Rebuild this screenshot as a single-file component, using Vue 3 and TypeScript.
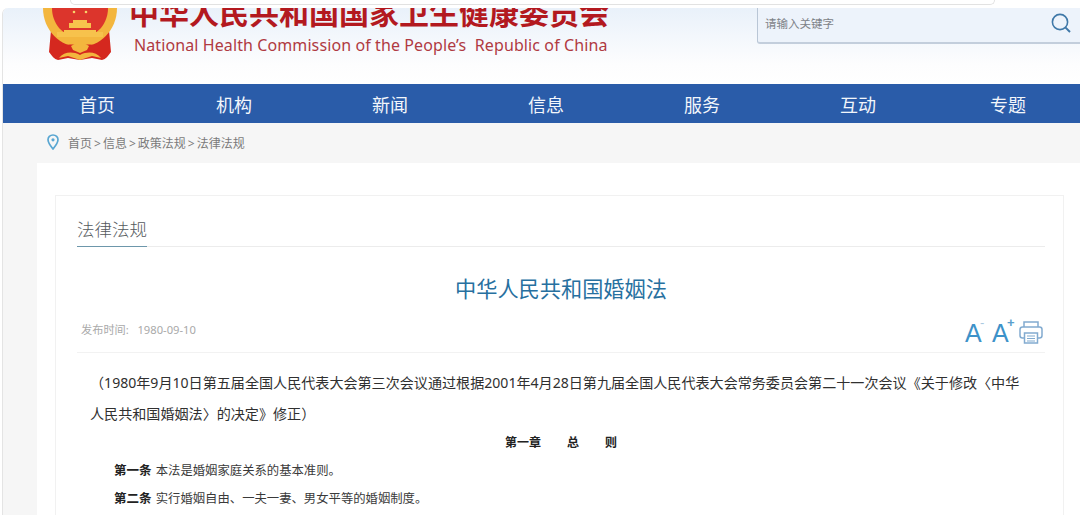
<script setup lang="ts">
const navItems = ['首页', '机构', '新闻', '信息', '服务', '互动', '专题']
const crumbs = ['首页', '信息', '政策法规', '法律法规']
</script>

<template>
  <div class="page">
    <div class="top-strip"><div class="tab-edge"></div></div>
    <div class="frame">
      <header class="header">
        <svg class="emblem" viewBox="0 0 80 54" width="80" height="54">
          <path d="M11 22 L69 22 L71 44 C68 48 66 51 62 52 L52 50 L40 52 L28 50 L18 52 C14 51 12 48 9 44 Z" fill="#d5281f" />
          <path d="M3 0 C3 22 20 39 40 39 C60 39 77 22 77 0 Z" fill="#f3b63e" />
          <path d="M12 0 C12 15 22 29 40 29 C58 29 68 15 68 0 Z" fill="#dc352c" />
          <path d="M29 15 H51 V20 H29 Z M24 22 H56 V24 H63 V29 H17 V24 H24 Z" fill="#f7c24c" />
          <rect x="33" y="12" width="14" height="3" fill="#f7c24c" />
          <path d="M20 40 C27 34 33 38 40 36 C47 38 53 34 60 40 C55 43 49 42 40 41 C31 42 25 43 20 40 Z" fill="#d5281f" />
          <path d="M31 38 L40 33 L49 38 L47 42 L40 45 L33 42 Z" fill="#f3b63e" />
          <path d="M19 50 C24 44 32 43 40 47 C48 43 56 44 61 50 L52 48 L40 52 L28 48 Z" fill="#f3b63e" />
          <circle cx="34" cy="4" r="1.300" fill="#f8d36a" />
          <circle cx="46" cy="4" r="1.300" fill="#f8d36a" />
        </svg>
        <div class="brand">
          <div class="brand-cn">中华人民共和国国家卫生健康委员会</div>
          <div class="brand-en">National Health Commission of the People’s&nbsp; Republic of China</div>
        </div>
        <div class="search">
          <span class="search-hint">请输入关键字</span>
          <svg class="search-icon" viewBox="0 0 20 20" width="20" height="20">
            <circle cx="9" cy="9" r="7.600" fill="none" stroke="#3f78a8" stroke-width="1.600" />
            <path d="M14.600 14.600 L19 19" stroke="#3f78a8" stroke-width="2" />
          </svg>
        </div>
      </header>

      <nav class="nav">
        <a v-for="item in navItems" :key="item" class="nav-item">{{ item }}</a>
      </nav>

      <div class="crumbs">
        <svg class="pin" viewBox="0 0 12 16" width="12" height="16">
          <path d="M6 1 C3 1 1 3.200 1 5.800 C1 9 4 12.500 6 15 C8 12.500 11 9 11 5.800 C11 3.200 9 1 6 1 Z" fill="none" stroke="#5aa7d2" stroke-width="1.700" />
          <circle cx="6" cy="5.800" r="1.600" fill="#5aa7d2" />
        </svg>
        <span>
          <template v-for="(crumb, i) in crumbs" :key="crumb">
            <span v-if="i > 0" class="sep">&gt;</span>{{ crumb }}
          </template>
        </span>
      </div>

      <main class="panel">
        <section class="card">
          <div class="section-head"><span class="section-title">法律法规</span></div>
          <h1 class="article-title">中华人民共和国婚姻法</h1>
          <div class="meta">
            <span class="date">发布时间:&nbsp;&nbsp;&nbsp;1980-09-10</span>
            <div class="tools">
              <span class="font-btn">A<sup class="minus">-</sup></span>
              <span class="font-btn">A<sup class="plus">+</sup></span>
              <svg class="printer" viewBox="0 0 24 24" width="24" height="24">
                <g fill="none" stroke="#82abd0" stroke-width="1.500">
                  <path d="M5 7 V2 H19 V7" />
                  <rect x="1" y="7" width="22" height="11" rx="2.500" />
                  <rect x="5.500" y="13" width="13" height="10" fill="#fff" />
                  <path d="M8 16 H16 M8 18.500 H16 M8 21 H16" stroke-width="1.200" />
                </g>
              </svg>
            </div>
          </div>
          <div class="content">
            <p class="preface">（1980年9月10日第五届全国人民代表大会第三次会议通过根据2001年4月28日第九届全国人民代表大会常务委员会第二十一次会议《关于修改〈中华<br />人民共和国婚姻法〉的决定》修正）</p>
            <h2 class="chapter">第一章<span class="gap"></span>总<span class="gap"></span>则</h2>
            <p class="clause"><b>第一条</b> 本法是婚姻家庭关系的基本准则。</p>
            <p class="clause"><b>第二条</b> 实行婚姻自由、一夫一妻、男女平等的婚姻制度。</p>
          </div>
        </section>
      </main>
    </div>
  </div>
</template>

<style>
html,
body {
  margin: 0;
  background: #fff;
}
</style>

<style scoped>
.page {
  width: 1080px;
  height: 515px;
  overflow: hidden;
  background: #fff;
  font-family: "Noto Sans", "Noto Sans CJK SC", sans-serif;
}

.top-strip {
  height: 8px;
  padding-left: 70px;
}

.tab-edge {
  width: 923px;
  height: 4px;
  border: 1px solid #e2e2e2;
  border-top: none;
  border-radius: 0 0 10px 10px;
}

.frame {
  margin-left: 2px;
  border-left: 1px solid #e4e4e4;
  border-top-left-radius: 6px;
  overflow: hidden;
}

.header {
  height: 76px;
  display: flex;
  align-items: flex-start;
  background: linear-gradient(#e9f1fa, #fdfdfe 75%, #fff);
}

.emblem {
  margin-left: 37px;
  flex: none;
}

.brand {
  margin-left: 9px;
  width: 500px;
  margin-top: -15px;
}

.brand-cn {
  height: 37px;
  line-height: 37px;
  font-size: 30px;
  font-weight: 700;
  color: #b3191f;
  white-space: nowrap;
  font-family: "Noto Sans CJK SC", sans-serif;
}

.brand-en {
  margin-left: 5px;
  margin-top: 3px;
  font-size: 16px;
  line-height: 24px;
  letter-spacing: 0.1px;
  color: #b03a42;
  white-space: nowrap;
}

.search {
  margin-left: 128px;
  flex: 1;
  height: 36px;
  display: flex;
  align-items: center;
  justify-content: space-between;
  padding: 0 9px 0 7px;
  background: #edf3fb;
  border-left: 1px solid #b9c6d6;
  border-bottom: 2px solid #c3cedc;
  border-bottom-left-radius: 3px;
  box-sizing: border-box;
}

.search-hint {
  font-size: 11.500px;
  color: #7d8288;
  margin-top: -4px;
}

.search-icon {
  margin-top: -4px;
}

.nav {
  height: 39px;
  display: flex;
  align-items: center;
  gap: 120px;
  padding-left: 76px;
  background: #2a5ca9;
}

.nav-item {
  font-size: 18px;
  line-height: 39px;
  padding-top: 1px;
  color: #f2f6fb;
  white-space: nowrap;
  font-family: "Noto Sans CJK SC", sans-serif;
}

.nav-item:first-child {
  margin-right: -19px;
}

.nav-item:last-child {
  margin-left: -6px;
}

.crumbs {
  height: 40px;
  display: flex;
  align-items: center;
  gap: 9px;
  padding-left: 44px;
  background: #f6f6f6;
  font-size: 12px;
  color: #7b7b7b;
}

.sep {
  padding: 0 2px;
}

.pin {
  margin-top: -2px;
}

.panel {
  margin-left: 34px;
  padding: 32px 16px 0 18px;
  background: #fff;
  height: 320px;
  box-shadow: -34px 0 0 #f6f6f6;
}

.card {
  height: 400px;
  padding: 0 18px 0 21px;
  border: 1px solid #f1f1f1;
}

.section-head {
  height: 50px;
  display: flex;
  align-items: flex-end;
  border-bottom: 1px solid #ececec;
}

.section-title {
  font-size: 17.500px;
  line-height: 29px;
  height: 31px;
  color: #55595d;
  font-weight: 300;
  border-bottom: 1px solid #6d97ab;
  margin-bottom: -1px;
}

.article-title {
  margin: 24px 0 0;
  text-align: center;
  font-size: 21.200px;
  line-height: 34px;
  font-weight: 400;
  color: #27709f;
  font-family: "Noto Sans CJK SC", sans-serif;
}

.meta {
  height: 37px;
  margin-top: 10px;
  padding: 0 2px 0 4px;
  display: flex;
  justify-content: space-between;
  align-items: flex-start;
  border-bottom: 1px solid #f2f2f2;
}

.date {
  font-size: 11.200px;
  line-height: 20px;
  margin-top: 5px;
  color: #a9a9a9;
}

.tools {
  display: flex;
  align-items: flex-start;
  margin-top: 5px;
}

.font-btn {
  width: 27px;
  font-size: 25px;
  line-height: 26px;
  color: #3d92c9;
  position: relative;
  font-family: "Liberation Sans", sans-serif;
}

.font-btn sup {
  position: absolute;
  top: -5px;
  left: 15px;
  font-size: 13px;
  line-height: 16px;
}

.minus {
  color: #aac9df;
}

.plus {
  font-weight: 700;
  color: #5a9fcc;
}

.content {
  color: #303030;
}

.preface {
  margin: 14px 0 0 13px;
  font-size: 14.080px;
  line-height: 31px;
  white-space: nowrap;
}

.chapter {
  margin: 0;
  text-align: center;
  font-size: 12px;
  line-height: 28px;
  font-weight: 700;
  color: #222;
}

.gap {
  display: inline-block;
  width: 26px;
}

.clause {
  margin: 0 0 0 37px;
  font-size: 12.350px;
  line-height: 28px;
  color: #3a3a3a;
}

.clause b {
  font-size: 12.500px;
  margin-right: 1px;
  color: #222;
}
</style>
